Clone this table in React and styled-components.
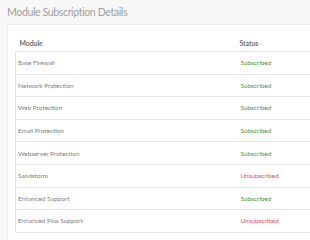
import styled, { createGlobalStyle } from 'styled-components'

const Global = createGlobalStyle`
  html, body { margin: 0; padding: 0; background: #f7f7f7; }
  body { font-family: Lato, "Noto Sans", sans-serif; overflow: hidden; }
`

const Page = styled.div`
  padding: 6px 0 0 7px;
  width: 310px;
  height: 240px;
  box-sizing: border-box;
  overflow: hidden;
`

const Title = styled.h2`
  margin: 0 0 6px 0;
  font-size: 10.6px;
  font-weight: 400;
  letter-spacing: -0.4px;
  color: #a0a0a0;
  line-height: 12px;
`

const Card = styled.section`
  background: #fff;
  border: 1px solid #ececec;
  border-right: none;
  padding: 10px 0 0 7px;
  height: 240px;
`

const Table = styled.table`
  border-collapse: collapse;
  table-layout: fixed;
  width: 100%;
  font-size: 6.4px;
`

const Head = styled.th`
  text-align: left;
  font-weight: 700;
  color: #6e6e6e;
  font-size: 6.8px;
  height: 16px;
  padding: 0 0 0 ${p => p.$pad || 0}px;
  border-bottom: 1px solid #e6e6e6;
  width: ${p => p.$w || 'auto'};
`

const Row = styled.tr`
  height: 22.6px;
  border-bottom: 1px solid #e6e6e6;
  & td:first-child { border-left: 1px solid #e6e6e6; }
`

const Name = styled.td`
  color: #808080;
  padding-left: 2px;
`

const Status = styled.td`
  color: ${p => (p.$on ? '#45943a' : '#f0434d')};
`

const modules = [
  ['Base Firewall', true],
  ['Network Protection', true],
  ['Web Protection', true],
  ['Email Protection', true],
  ['Webserver Protection', true],
  ['Sandstorm', false],
  ['Enhanced Support', true],
  ['Enhanced Plus Support', false],
]

export default function App() {
  return (
    <Page>
      <Global />
      <Title>Module Subscription Details</Title>
      <Card>
        <Table>
          <thead>
            <tr>
              <Head $pad={4} $w="220px">Module</Head>
              <Head>Status</Head>
            </tr>
          </thead>
          <tbody>
            {modules.map(([name, on]) => (
              <Row key={name}>
                <Name>{name}</Name>
                <Status $on={on}>{on ? 'Subscribed' : 'Unsubscribed'}</Status>
              </Row>
            ))}
          </tbody>
        </Table>
      </Card>
    </Page>
  )
}
